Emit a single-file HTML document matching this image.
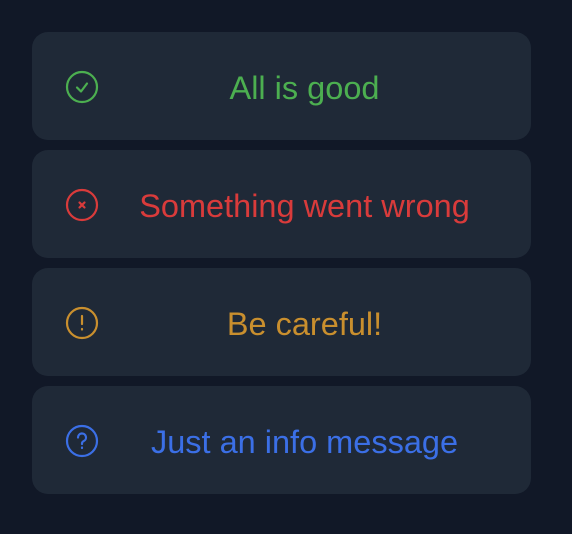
<!DOCTYPE html><html><head><style>
body{margin:0;width:572px;height:534px;background:#111827;font-family:"Liberation Sans",sans-serif;position:relative;overflow:hidden}
.c{position:absolute;left:32px;width:499px;height:108px;background:#1f2937;border-radius:16px}
.c svg{position:absolute;left:32px;top:37px;overflow:visible}
.t{position:absolute;left:70px;right:0;top:2px;line-height:108px;text-align:center;font-size:32.5px;padding-right:24px}
</style></head><body>
<div class="c" style="top:32px"><svg width="36" height="36" viewBox="0 0 36 36" fill="none" stroke="#4caf50" stroke-width="2.2" stroke-linecap="round" stroke-linejoin="round"><circle cx="18" cy="18" r="15"/><path d="M13 18.5l4 4 6-8"/></svg><div class="t" style="color:#4caf50">All is good</div></div>
<div class="c" style="top:150px"><svg width="36" height="36" viewBox="0 0 36 36" fill="none" stroke="#d93b3b" stroke-width="2.2" stroke-linecap="round"><circle cx="18" cy="18" r="15"/><path d="M15.5 15.5l5 5M20.5 15.5l-5 5"/></svg><div class="t" style="color:#d93b3b">Something went wrong</div></div>
<div class="c" style="top:268px"><svg width="36" height="36" viewBox="0 0 36 36" fill="none" stroke="#c98f2e" stroke-width="2.2" stroke-linecap="round"><circle cx="18" cy="18" r="15"/><path d="M18 11v8M18 24v0.5"/></svg><div class="t" style="color:#c98f2e">Be careful!</div></div>
<div class="c" style="top:386px"><svg width="36" height="36" viewBox="0 0 36 36" fill="none" stroke="#3b6fe6" stroke-width="2.2" stroke-linecap="round"><circle cx="18" cy="18" r="15"/><path d="M14 14.5a4 4 0 1 1 5.5 3.7c-1 .5-1.5 1.2-1.5 2.3v.5M18 24.5v0.5"/></svg><div class="t" style="color:#3b6fe6">Just an info message</div></div>
</body></html>
